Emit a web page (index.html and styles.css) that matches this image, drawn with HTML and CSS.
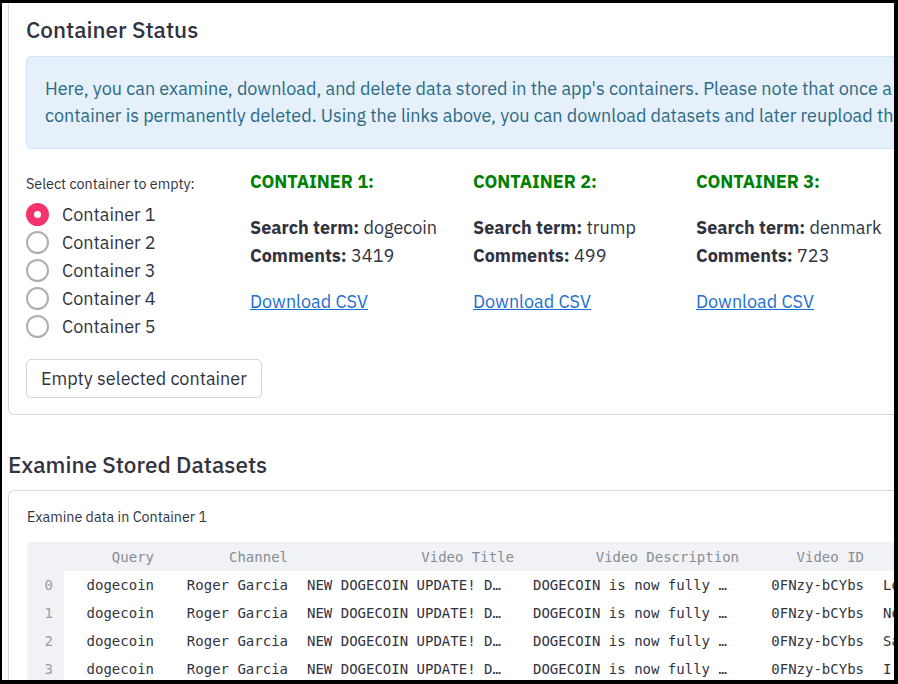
FILE: index.html
```html
<!DOCTYPE html>
<html lang="en">
<head>
<meta charset="utf-8">
<title>Container Status</title>
<link rel="stylesheet" href="styles.css">
</head>
<body>
<div class="page">
  <section class="card card-status">
    <h2 class="title">Container Status</h2>
    <div class="info">
      <p class="info-line">Here, you can examine, download, and delete data stored in the app's containers. Please note that once a</p>
      <p class="info-line">container is permanently deleted. Using the links above, you can download datasets and later reupload them.</p>
    </div>
    <div class="status-row">
      <div class="selector">
        <div class="small-label">Select container to empty:</div>
        <div class="radios">
          <label class="radio"><span class="dot checked"></span>Container 1</label>
          <label class="radio"><span class="dot"></span>Container 2</label>
          <label class="radio"><span class="dot"></span>Container 3</label>
          <label class="radio"><span class="dot"></span>Container 4</label>
          <label class="radio"><span class="dot"></span>Container 5</label>
        </div>
      </div>
      <div class="ccol">
        <div class="chead">CONTAINER 1:</div>
        <div class="cline"><b>Search term:</b> dogecoin</div>
        <div class="cline"><b>Comments:</b> 3419</div>
        <a class="dl" href="#">Download CSV</a>
      </div>
      <div class="ccol">
        <div class="chead">CONTAINER 2:</div>
        <div class="cline"><b>Search term:</b> trump</div>
        <div class="cline"><b>Comments:</b> 499</div>
        <a class="dl" href="#">Download CSV</a>
      </div>
      <div class="ccol">
        <div class="chead">CONTAINER 3:</div>
        <div class="cline"><b>Search term:</b> denmark</div>
        <div class="cline"><b>Comments:</b> 723</div>
        <a class="dl" href="#">Download CSV</a>
      </div>
    </div>
    <button class="btn">Empty selected container</button>
  </section>

  <h2 class="title section-title">Examine Stored Datasets</h2>

  <section class="card card-data">
    <div class="small-label">Examine data in Container 1</div>
    <table class="grid">
      <colgroup>
        <col class="w-idx"><col class="w-query"><col class="w-channel"><col class="w-title"><col class="w-desc"><col class="w-id"><col class="w-comment">
      </colgroup>
      <thead>
        <tr>
          <th class="idx"></th>
          <th>Query</th>
          <th>Channel</th>
          <th>Video Title</th>
          <th>Video Description</th>
          <th>Video ID</th>
          <th>Comment</th>
        </tr>
      </thead>
      <tbody>
        <tr><td class="idx">0</td><td class="r">dogecoin</td><td class="r">Roger Garcia</td><td>NEW DOGECOIN UPDATE! D…</td><td>DOGECOIN is now fully …</td><td class="r">0FNzy-bCYbs</td><td>Lots of love for doge</td></tr>
        <tr><td class="idx">1</td><td class="r">dogecoin</td><td class="r">Roger Garcia</td><td>NEW DOGECOIN UPDATE! D…</td><td>DOGECOIN is now fully …</td><td class="r">0FNzy-bCYbs</td><td>Nobody is selling</td></tr>
        <tr><td class="idx">2</td><td class="r">dogecoin</td><td class="r">Roger Garcia</td><td>NEW DOGECOIN UPDATE! D…</td><td>DOGECOIN is now fully …</td><td class="r">0FNzy-bCYbs</td><td>Same here</td></tr>
        <tr><td class="idx">3</td><td class="r">dogecoin</td><td class="r">Roger Garcia</td><td>NEW DOGECOIN UPDATE! D…</td><td>DOGECOIN is now fully …</td><td class="r">0FNzy-bCYbs</td><td>I think it will go up</td></tr>
      </tbody>
    </table>
  </section>
</div>
</body>
</html>
```
FILE: styles.css
```css
html, body {
  height: 100%;
}
body {
  margin: 0;
  box-sizing: border-box;
  height: 684px;
  border-style: solid;
  border-color: #000;
  border-width: 3px 4px 4px 2px;
  overflow: hidden;
  background: #fff;
  font-family: "IBM Plex Sans", "Open Sans", "Noto Sans", sans-serif;
  color: #31333f;
}
.page {
  width: 1200px;
  padding-left: 6px;
}
.card {
  border: 1px solid #d9d9dc;
  border-radius: 6px;
}
.card-status {
  border-top: 0;
  border-radius: 0 0 6px 6px;
  padding: 14px 17px 16px;
}
.title {
  margin: 0;
  font-size: 22.5px;
  line-height: 26px;
  font-weight: 500;
  color: #31333f;
}
.info {
  margin-top: 13px;
  background: #e6f0fa;
  border: 1px solid #cfe3f6;
  border-radius: 5px;
  padding: 18px 18px 19px;
  color: #2a6a85;
  font-size: 18px;
  line-height: 27px;
}
.info-line {
  margin: 0;
  white-space: nowrap;
}
.status-row {
  display: flex;
  margin-top: 20px;
}
.selector {
  width: 224px;
  flex: none;
  padding-top: 5px;
}
.small-label {
  font-size: 14.3px;
  line-height: 20px;
  color: #31333f;
}
.radios {
  margin-top: 6px;
  display: flex;
  flex-direction: column;
}
.radio {
  display: flex;
  align-items: center;
  height: 28px;
  font-size: 18px;
  gap: 13px;
  color: #31333f;
}
.dot {
  width: 23px;
  height: 23px;
  box-sizing: border-box;
  border-radius: 50%;
  border: 2px solid #aeaeb2;
  background: #fff;
  flex: none;
  display: flex;
  align-items: center;
  justify-content: center;
}
.dot.checked {
  border-color: #f5336a;
  background: #f5336a;
}
.dot.checked::after {
  content: "";
  width: 7px;
  height: 7px;
  border-radius: 50%;
  background: #fff;
}
.btn {
  display: block;
  margin-top: 19px;
  font-family: inherit;
  font-size: 18px;
  line-height: 25px;
  padding: 6px 14px;
  background: #fff;
  color: #31333f;
  border: 1px solid #d4d4d8;
  border-radius: 5px;
  white-space: nowrap;
}
.ccol {
  width: 223px;
  flex: none;
  display: flex;
  flex-direction: column;
  align-items: flex-start;
  font-size: 18px;
}
.chead {
  color: #008000;
  font-weight: 700;
  line-height: 25px;
  margin-bottom: 20px;
}
.cline {
  line-height: 28px;
}
.cline b {
  font-weight: 700;
}
.dl {
  margin-top: 18px;
  line-height: 28px;
  color: #1b6fd0;
  text-decoration: underline;
}
.section-title {
  margin-top: 37px;
  margin-bottom: 12px;
}
.card-data {
  border-right: 0;
  border-bottom: 0;
  border-radius: 6px 0 0 0;
  padding: 16px 0 0 18px;
  height: 300px;
}
.grid {
  margin-top: 15px;
  border-collapse: collapse;
  table-layout: fixed;
  width: 1137px;
  font-family: "DejaVu Sans Mono", "Liberation Mono", monospace;
  font-size: 14px;
}
.w-idx { width: 37px; }
.w-query { width: 100px; }
.w-channel { width: 134px; }
.w-title { width: 226px; }
.w-desc { width: 225px; }
.w-id { width: 125px; }
.w-comment { width: 290px; }
.grid th {
  background: #f0f2f6;
  color: #8a8c94;
  font-weight: 400;
  text-align: right;
  height: 29px;
  padding: 0 10px;
  white-space: nowrap;
  overflow: hidden;
}
.grid td {
  height: 28px;
  padding: 0 9px;
  color: #31333f;
  white-space: nowrap;
  overflow: hidden;
}
.grid td.r {
  text-align: right;
  padding-right: 10px;
}
.grid .idx {
  background: #f0f2f6;
  color: #9a9ca4;
  text-align: right;
  padding: 0 11px 0 0;
}
```
